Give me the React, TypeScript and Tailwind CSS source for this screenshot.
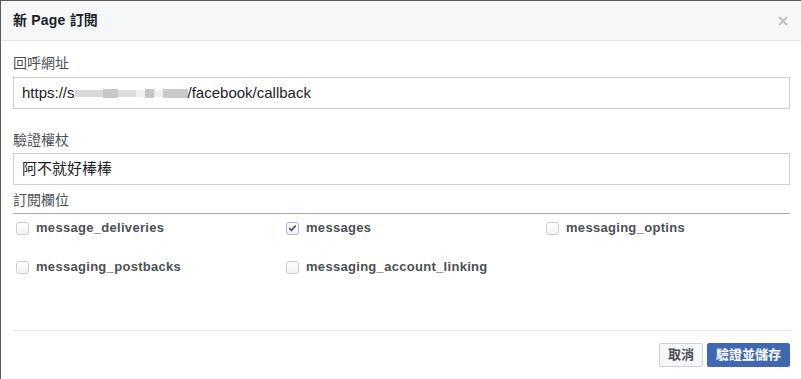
const FONT = { fontFamily: '"Liberation Sans", Arial, "Noto Sans CJK TC", sans-serif' };

const fields = [
  { name: 'message_deliveries', checked: false },
  { name: 'messages', checked: true },
  { name: 'messaging_optins', checked: false },
  { name: 'messaging_postbacks', checked: false },
  { name: 'messaging_account_linking', checked: false },
];

function Checkbox({ checked }: { checked: boolean }) {
  return (
    <span
      className={`flex h-[13px] w-[13px] shrink-0 items-center justify-center rounded-[3px] border bg-gradient-to-b from-white to-[#f1f2f4] ${
        checked ? 'border-[#a6b7d6]' : 'border-[#c9ccd1]'
      }`}
    >
      {checked && (
        <svg width="9" height="8" viewBox="0 0 9 8">
          <path d="M1.2 4.2 L3.4 6.3 L7.8 1.6" fill="none" stroke="#4b4f56" strokeWidth="1.6" />
        </svg>
      )}
    </span>
  );
}

// pixelated blur over the host name
function Blurred() {
  return (
    <span className="inline-flex h-[9px] items-center align-middle">
      <span className="h-[7px] w-[28px] bg-[#d9d9d9]" />
      <span className="h-[9px] w-[15px] bg-[#c8c8c8]" />
      <span className="h-[7px] w-[18px] bg-[#dcdcdc]" />
      <span className="h-[7px] w-[9px] bg-[#f0f0f0]" />
      <span className="h-[9px] w-[9px] bg-[#c4c4c4]" />
      <span className="h-[7px] w-[9px] bg-[#eeeeee]" />
      <span className="h-[9px] w-[25px] bg-[#c9c9c9]" />
    </span>
  );
}

export default function App() {
  return (
    <div style={FONT} className="h-[379px] w-[801px] overflow-hidden border-l border-t border-[#5a5a5a] bg-white">
      <div className="flex h-[40px] items-center justify-between border-b border-[#e5e5e5] bg-[#f6f7f9] pl-[12px] pr-[13px]">
        <span className="text-[14px] font-bold tracking-[0.2px] text-[#1d2129]">新 Page 訂閱</span>
        <svg width="10" height="10" viewBox="0 0 10 10">
          <path d="M1 1 L9 9 M9 1 L1 9" stroke="#bec2c9" strokeWidth="2" />
        </svg>
      </div>

      <div className="pl-[12px] pr-[11px] pt-[13px]">
        <div className="text-[14px] leading-[18px] text-[#4b4f56]">回呼網址</div>
        <div className="mt-[5px] flex h-[32px] items-center border border-[#ccd0d5] px-[8px] text-[15px] text-[#1d2129]">
          https://s<Blurred />/facebook/callback
        </div>

        <div className="mt-[22px] text-[14px] leading-[18px] text-[#4b4f56]">驗證權杖</div>
        <div className="mt-[4px] flex h-[32px] items-center border border-[#ccd0d5] px-[8px] text-[15px] text-[#1d2129]">
          阿不就好棒棒
        </div>

        <div className="mt-[6px] border-b border-[#a8a8a8] pb-[4px] text-[14px] leading-[18px] text-[#4b4f56]">
          訂閱欄位
        </div>

        <div className="grid grid-cols-[270px_260px_1fr] gap-y-[25px] pl-[3px] pt-[7px]">
          {fields.map((f) => (
            <label key={f.name} className="flex h-[14px] items-center gap-[7px]">
              <Checkbox checked={f.checked} />
              <span className="text-[13px] font-bold tracking-[0.3px] text-[#4b4f56]">{f.name}</span>
            </label>
          ))}
        </div>

        <div className="mt-[56px] border-t border-[#e5e5e5]" />

        <div className="flex justify-end gap-[4px] pt-[12px]">
          <button className="h-[24px] rounded-[2px] border border-[#ced0d4] bg-[#f6f7f9] px-[8px] text-[13px] font-bold text-[#4b4f56]">
            取消
          </button>
          <button className="h-[24px] rounded-[2px] border border-[#4267b2] bg-[#4267b2] px-[8px] text-[13px] font-bold text-white">
            驗證並儲存
          </button>
        </div>
      </div>
    </div>
  );
}
